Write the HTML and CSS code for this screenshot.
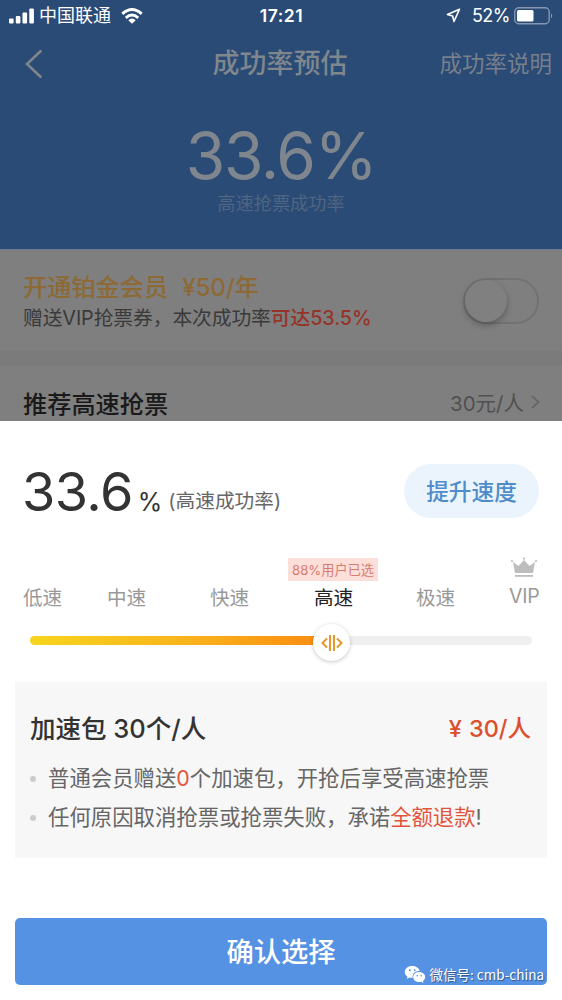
FILE: index.html
```html
<!DOCTYPE html>
<html lang="zh-CN">
<head>
<meta charset="utf-8">
<title>成功率预估</title>
<link rel="stylesheet" href="styles.css">
</head>
<body>
<div class="screen">
  <header class="hero">
    <div class="status">
      <div class="status-left">
        <svg class="signal" width="26" height="16" viewBox="0 0 26 16" fill="#fff"><rect x="0" y="10.5" width="4.600" height="5" rx="1"/><rect x="6.800" y="8" width="4.600" height="7.500" rx="1"/><rect x="13.500" y="4.500" width="4.600" height="11" rx="1"/><rect x="20.300" y="0.500" width="4.600" height="15" rx="1"/></svg>
        <span class="carrier">中国联通</span>
        <svg class="wifi" width="22" height="16" viewBox="0 0 22 16" fill="none" stroke="#fff" stroke-width="2.900"><path d="M1.300 5.800Q11 -2.600 20.700 5.800"/><path d="M4.800 9.800Q11 4.300 17.200 9.800"/><path d="M7.300 12.200Q11 9 14.700 12.200L11 15.700Z" fill="#fff" stroke="none"/></svg>
      </div>
      <span class="clock">17:21</span>
      <div class="status-right">
        <svg width="15" height="15" viewBox="0 0 15 15" fill="none" stroke="#fff" stroke-width="1.600" stroke-linejoin="round"><path d="M13.500 1.200L1.400 6.500L6.600 8L8 13.500Z"/></svg>
        <span class="percent">52%</span>
        <svg class="battery" width="40" height="18" viewBox="0 0 40 18"><rect x=".8" y=".8" width="34.400" height="16" rx="4" fill="none" stroke="#8796b0" stroke-width="1.400"/><rect x="3" y="3" width="16.500" height="11.500" rx="1.500" fill="#fff"/><path d="M37 6Q39.500 8.800 37 11.600Z" fill="#8796b0"/></svg>
      </div>
    </div>
    <nav class="nav">
      <svg class="back" width="18" height="30" viewBox="0 0 18 30" fill="none" stroke="#7f858d" stroke-width="2.600"><path d="M16.300 1.500L2 15L16.300 28.500"/></svg>
      <h1 class="title">成功率预估</h1>
      <span class="explain">成功率说明</span>
    </nav>
    <div class="rate">33.6%</div>
    <div class="rate-label">高速抢票成功率</div>
  </header>

  <section class="member">
    <div class="member-text">
      <div class="member-title"><span>开通铂金会员</span><span class="member-price">¥50/年</span></div>
      <div class="member-sub">赠送VIP抢票券，本次成功率<b>可达53.5%</b></div>
    </div>
    <div class="toggle"><div class="knob"></div></div>
  </section>

  <section class="recommend">
    <span class="recommend-title">推荐高速抢票</span>
    <span class="recommend-price">30元/人</span>
    <svg width="9" height="14" viewBox="0 0 9 14" fill="none" stroke="#626262" stroke-width="1.600"><path d="M1 1L7.500 7L1 13"/></svg>
  </section>

  <main class="sheet">
    <div class="summary">
      <span class="summary-num">33.6</span>
      <span class="summary-pct">%</span>
      <span class="summary-label">(高速成功率)</span>
      <button class="boost">提升速度</button>
    </div>

    <div class="speeds">
      <span>低速</span>
      <span>中速</span>
      <span>快速</span>
      <span class="speed-on">高速<em class="tag">88%用户已选</em></span>
      <span>极速</span>
      <span class="vip">
        <svg class="crown" width="28" height="21" viewBox="0 0 28 21" fill="#bdbdbd"><path d="M3 5L8.500 9L14 3L19.500 9L25 5L23 16H5Z"/><circle cx="2" cy="4" r="1.100"/><circle cx="14" cy="1.600" r="1.100"/><circle cx="26" cy="4" r="1.100"/><rect x="5" y="18" width="18" height="1.800"/></svg>
        VIP</span>
    </div>

    <div class="slider">
      <div class="slider-fill"></div>
      <div class="slider-knob"><svg width="22" height="18" viewBox="0 0 22 18" fill="none" stroke="#e39a30" stroke-width="2.100"><path d="M6 4.500L1.500 9L6 13.500M9 1V17M13 1V17M16 4.500L20.500 9L16 13.500"/></svg></div>
    </div>

    <section class="pack">
      <div class="pack-head"><span class="pack-name">加速包 30个/人</span><span class="pack-price"><i>¥</i>30/人</span></div>
      <ul class="notes">
        <li>普通会员赠送<b>0</b>个加速包，开抢后享受高速抢票</li>
        <li>任何原因取消抢票或抢票失败，承诺<b>全额退款</b>!</li>
      </ul>
    </section>

    <button class="confirm">确认选择</button>
    <div class="watermark">
      <svg width="22" height="19" viewBox="0 0 22 19"><path d="M8.200 1C3.900 1 .8 3.700.8 7.100c0 2 1 3.600 2.700 4.700L2.800 14l2.700-1.400c1 .3 1.900.4 3 .4C8.200 8.600 11.300 6 15.700 6 15 3 12 1 8.200 1Z" fill="#fff"/><path d="M21.200 12c0-2.900-2.800-5.100-6-5.100s-6 2.200-6 5.100 2.800 5.100 6 5.100c.8 0 1.500-.1 2.200-.4l2.100 1.200-.6-1.900c1.400-1 2.300-2.300 2.300-4Z" fill="#fff"/><g fill="#5592e3"><circle cx="5.800" cy="5.300" r=".95"/><circle cx="10.700" cy="5.300" r=".95"/><circle cx="13.200" cy="10.700" r=".8"/><circle cx="17.200" cy="10.700" r=".8"/></g></svg>
      <span>微信号: cmb-china</span>
    </div>
  </main>
</div>
</body>
</html>
```
FILE: styles.css
```css
* { box-sizing: border-box; }
body { margin: 0; background: #fff; }
button { border: 0; padding: 0; font-family: inherit; }
.screen {
  width: 562px; height: 1000px; overflow: hidden;
  display: flex; flex-direction: column;
  font-family: Inter, "Noto Sans CJK SC", sans-serif;
  white-space: nowrap;
}

/* header */
.hero { height: 250px; background: #2a4b75; border-bottom: 1px solid #6e7c92; color: #7f868e; flex: none; }
.status { height: 31px; display: grid; grid-template-columns: 1fr auto 1fr; align-items: center; padding: 0 8px 0 9px; color: #fff; }
.status-left, .status-right { display: flex; align-items: center; }
.status-right { justify-content: flex-end; }
.carrier { font-size: 18px; margin-left: 4px; line-height: 30px; }
.wifi { margin-left: 10px; }
.clock { font-size: 17.500px; font-weight: 600; letter-spacing: .5px; }
.percent { font-size: 18px; letter-spacing: -.5px; margin: 0 4px 0 11px; }
.nav { height: 65px; display: grid; grid-template-columns: 1fr auto 1fr; align-items: center; padding: 0 10px 0 25px; }
.title { margin: 0 17px 0 0; font-size: 27px; font-weight: 500; line-height: 40px; }
.explain { justify-self: end; font-size: 22.500px; line-height: 34px; color: #767f8b; }
.rate { margin-top: 33px; height: 54px; line-height: 54px; font-size: 64px; font-weight: 400; text-align: center; letter-spacing: -1.300px; }
.rate-label { margin-top: 8px; line-height: 24px; font-size: 18.200px; text-align: center; color: #506582; }

/* dimmed rows */
.member { height: 101px; background: #7f7f7f; display: flex; justify-content: space-between; padding: 23px 23px 0; flex: none; }
.member-title { display: flex; gap: 14px; font-size: 24.200px; line-height: 30px; color: #8d6a35; font-weight: 500; }
.member-price { letter-spacing: -.1px; }
.member-sub { font-size: 19.800px; line-height: 31px; color: #3a3a3a; letter-spacing: -.1px; }
.member-sub b { color: #963329; font-weight: 500; }
.toggle { width: 76px; height: 46px; margin-top: 5px; border: 2px solid #727272; border-radius: 23px; }
.knob { width: 42px; height: 42px; border-radius: 50%; background: #808080; box-shadow: 0 3px 6px rgba(0,0,0,.28); }
.recommend { height: 70px; background: #7f7f7f; border-top: 14px solid #7b7b7b; display: flex; align-items: center; padding: 18px 22px 0 23px; flex: none; }
.recommend-title { flex: 1; font-size: 24.200px; font-weight: 500; color: #1a1a1a; }
.recommend-price { font-size: 20.500px; color: #505050; margin-right: 7px; }

/* bottom sheet */
.sheet { flex: 1; padding: 43px 15px 0; background: #fff; position: relative; }
.summary { height: 54px; display: flex; align-items: baseline; padding: 0 8px; color: #333; }
.summary-num { font-size: 54px; line-height: 55px; letter-spacing: -.6px; margin-left: -1px; }
.summary-pct { font-size: 25px; margin-left: 5px; }
.summary-label { font-size: 19.700px; margin-left: 6px; color: #666; position: relative; top: -3px; }
.boost { align-self: flex-start; width: 135px; height: 54px; padding-bottom: 2px; margin-left: auto; border-radius: 27px; background: #ebf4fd; color: #4e8ccb; font-size: 22.700px; font-weight: 500; }
.speeds { display: grid; grid-template-columns: 84px 103px 104px 102px 93px auto; margin-top: 65px; padding-left: 8px; height: 30px; line-height: 30px; font-size: 19.600px; color: #999; }
.speed-on { color: #222; position: relative; }
.tag { position: absolute; left: -26px; top: -25px; width: 90px; height: 23px; line-height: 24px; background: #fddfda; color: #d67c70; font-size: 13.200px; font-style: normal; font-weight: 400; text-align: center; }
.vip { position: relative; font-size: 19.500px; line-height: 26px; letter-spacing: -.2px; }
.crown { position: absolute; left: 1px; top: -26px; }
.slider { margin: 23px 15px 0; height: 9px; border-radius: 5px; background: #efefef; position: relative; }
.slider-fill { width: 300px; height: 9px; border-radius: 5px; background: linear-gradient(90deg, #f7d51c, #f9b51c 50%, #f98a10); }
.slider-knob { position: absolute; left: 283px; top: -12px; width: 37px; height: 37px; border-radius: 50%; background: #fff; box-shadow: 0 1px 4px rgba(0,0,0,.22); display: flex; align-items: center; justify-content: center; }
.pack { margin-top: 37px; height: 176px; background: #f7f7f7; padding: 28px 16px 0 15px; }
.pack-head { display: flex; justify-content: space-between; line-height: 38px; font-size: 25.500px; font-weight: 500; color: #333; }
.pack-price { color: #dc4f2d; font-size: 23.500px; font-weight: 500; }
.pack-price i { font-style: normal; margin-right: 7px; }
.notes { list-style: none; margin: 11px 0 0; padding: 0; font-size: 21.400px; line-height: 39px; color: #666; }
.notes li { display: flex; align-items: center; }
.notes li::before { content: ""; width: 6px; height: 6px; border-radius: 50%; background: #ccc; margin-right: 12px; }
.notes b { font-weight: 400; color: #e2553d; letter-spacing: -.1px; }
.confirm { display: block; width: 532px; height: 67px; padding-bottom: 4px; margin-top: 60px; border-radius: 5px; background: #5592e3; color: #fff; font-size: 27.300px; font-weight: 500; }
.watermark { position: absolute; right: 18px; bottom: 15px; display: flex; align-items: center; gap: 4px; height: 22px; color: #fff; font-family: "Noto Sans CJK SC", sans-serif; font-size: 13.500px; text-shadow: 1px 1px 1px rgba(0,0,0,.45); }
```
